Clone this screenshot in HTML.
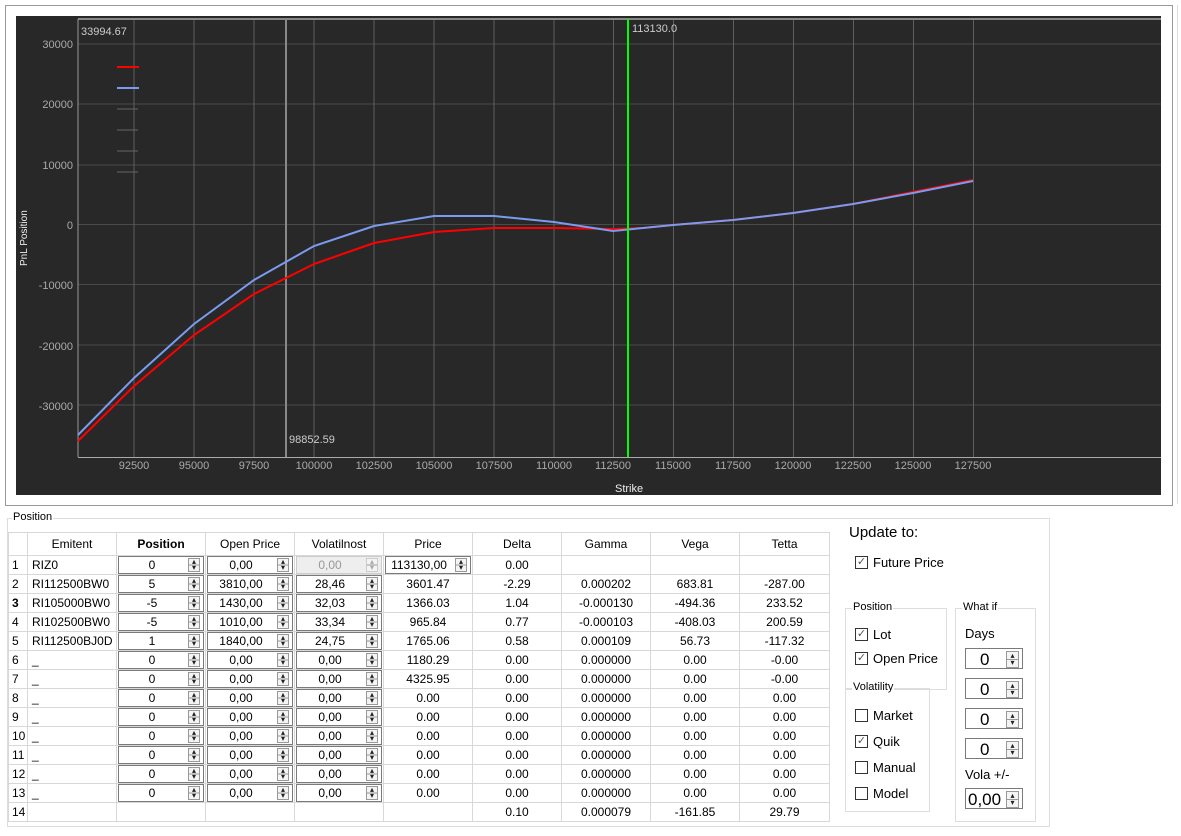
<!DOCTYPE html><html><head><style>
body{margin:0;width:1181px;height:836px;background:#fff;font-family:"Liberation Sans",sans-serif;position:relative;overflow:hidden}
.a{position:absolute}
table{border-collapse:collapse;font-size:12px;table-layout:fixed}
td{border:1px solid #d8d8d8;height:18px;padding:0;text-align:center;color:#000;white-space:nowrap}
th{font-weight:normal;height:20px;border:1px solid #d8d8d8;font-size:12px}
td.n{text-align:left;padding-left:3px}
td.e{text-align:left;padding-left:4px}
.s{position:relative;border:1px solid #7a7a7a;height:16px;margin:0 1px;background:#fff;line-height:16px;padding-right:18px}
.s:after,.sp:after{content:"\25B4\A\25BE";white-space:pre;position:absolute;right:3px;top:1px;width:10px;height:12px;border:1px solid #999;background:linear-gradient(#f4f4f4 46%,#999 46%,#999 54%,#f4f4f4 54%);font-size:8px;line-height:6px;color:#222;text-align:center}
.dis{background:#eee;color:#999;border-color:#ccc}
.dis:after{color:#aaa;border-color:#ccc}
.cb{display:inline-block;box-sizing:border-box;width:13px;height:13px;border:1px solid #333;vertical-align:middle;margin-right:5px;margin-top:-2px;font-size:11px;line-height:11px;text-align:center;color:#555}
.g{border:1px solid #ddd;position:absolute}
.g span.t{position:absolute;top:-8px;left:6px;background:#fff;font-size:11px;padding:0 1px}
.lb{position:absolute;font-size:13px}
.sp{position:absolute;left:965px;width:58px;height:21px;border:1px solid #7a7a7a;font-size:17px;line-height:21px;padding-left:14px;box-sizing:border-box}
.sp:after{top:2px;width:11px;height:15px;line-height:7px}
</style></head><body>
<div class="a" style="left:5px;top:5px;width:1166px;height:499px;border:1px solid #999"></div>
<div class="a" style="left:1177px;top:5px;width:1px;height:499px;background:#ddd"></div>
<svg class="a" style="left:16px;top:16px" width="1145" height="479" font-family="Liberation Sans" font-size="11">
<rect width="1145" height="479" fill="#282828"/>
<g stroke="#4a4a4a" stroke-width="1">
<line x1="62" y1="28" x2="1145" y2="28"/><line x1="62" y1="88" x2="1145" y2="88"/><line x1="62" y1="149" x2="1145" y2="149"/><line x1="62" y1="208.5" x2="1145" y2="208.5"/><line x1="62" y1="268.5" x2="1145" y2="268.5"/><line x1="62" y1="329" x2="1145" y2="329"/><line x1="62" y1="389" x2="1145" y2="389"/>
</g>
<g stroke="#5e5e5e">
<line x1="118" y1="3" x2="118" y2="441"/><line x1="178" y1="3" x2="178" y2="441"/><line x1="238" y1="3" x2="238" y2="441"/><line x1="298" y1="3" x2="298" y2="441"/><line x1="358" y1="3" x2="358" y2="441"/><line x1="418" y1="3" x2="418" y2="441"/><line x1="478" y1="3" x2="478" y2="441"/><line x1="538" y1="3" x2="538" y2="441"/><line x1="597.5" y1="3" x2="597.5" y2="441"/><line x1="657.5" y1="3" x2="657.5" y2="441"/><line x1="717.5" y1="3" x2="717.5" y2="441"/><line x1="777.5" y1="3" x2="777.5" y2="441"/><line x1="837.5" y1="3" x2="837.5" y2="441"/><line x1="897.5" y1="3" x2="897.5" y2="441"/><line x1="957.5" y1="3" x2="957.5" y2="441"/>
</g>
<line x1="62" y1="3" x2="1145" y2="3" stroke="#888" stroke-width="2"/>
<line x1="62" y1="3" x2="62" y2="441" stroke="#999"/>
<line x1="62" y1="441.5" x2="1145" y2="441.5" stroke="#aaa"/>
<line x1="270" y1="3" x2="270" y2="441" stroke="#888" stroke-width="2"/>
<g stroke="#666"><line x1="101" y1="93" x2="122" y2="93"/><line x1="101" y1="114" x2="122" y2="114"/><line x1="101" y1="135" x2="122" y2="135"/><line x1="101" y1="156" x2="122" y2="156"/></g>
<line x1="101" y1="51" x2="123" y2="51" stroke="#f00" stroke-width="2"/>
<line x1="101" y1="72" x2="123" y2="72" stroke="#7b9bf0" stroke-width="2"/>
<polyline fill="none" stroke="#f00" stroke-width="2" points="62,425 118,370 178,319 238,278 298,248 358,227 418,216 478,212 538,212 597,213 627,212 657,209 717,204 777,197 837,188 897,176 957,164"/>
<polyline fill="none" stroke="#7b9bf0" stroke-width="2" points="62,419 118,362 178,308 238,264 298,230 358,210 418,200 478,200 538,206 597,215 627,212 657,209 717,204 777,197 837,188 897,177 957,165"/>
<line x1="612" y1="3" x2="612" y2="441" stroke="#0f0" stroke-width="2"/>
<g fill="#aaa" text-anchor="end"><text x="57" y="32">30000</text><text x="57" y="92">20000</text><text x="57" y="153">10000</text><text x="57" y="213">0</text><text x="57" y="273">-10000</text><text x="57" y="334">-20000</text><text x="57" y="394">-30000</text></g>
<g fill="#aaa" text-anchor="middle"><text x="118" y="453">92500</text><text x="178" y="453">95000</text><text x="238" y="453">97500</text><text x="298" y="453">100000</text><text x="358" y="453">102500</text><text x="418" y="453">105000</text><text x="478" y="453">107500</text><text x="538" y="453">110000</text><text x="597" y="453">112500</text><text x="657" y="453">115000</text><text x="717" y="453">117500</text><text x="777" y="453">120000</text><text x="837" y="453">122500</text><text x="897" y="453">125000</text><text x="957" y="453">127500</text></g>
<text x="599" y="476" fill="#eee">Strike</text>
<text x="65" y="19" fill="#ccc">33994.67</text>
<text x="616" y="16" fill="#ccc">113130.0</text>
<text x="273" y="427" fill="#ccc">98852.59</text>
<text transform="translate(11,250) rotate(-90)" fill="#eee" font-size="10">PnL Position</text>
</svg>
<div class="g" style="left:7px;top:518px;width:1041px;height:307px"><span class="t" style="left:4px">Position</span></div>
<table class="a" style="left:8px;top:532px;width:822px;border:1px solid #999">
<colgroup><col style="width:19px"><col style="width:89px"><col style="width:89px"><col style="width:89px"><col style="width:89px"><col style="width:89px"><col style="width:89px"><col style="width:89px"><col style="width:89px"><col style="width:90px"></colgroup>
<tr><th></th><th>Emitent</th><th><b>Position</b></th><th>Open Price</th><th>Volatilnost</th><th>Price</th><th>Delta</th><th>Gamma</th><th>Vega</th><th>Tetta</th></tr>
<tr><td class="n">1</td><td class="e">RIZ0</td><td><div class="s">0</div></td><td><div class="s">0,00</div></td><td><div class="s dis">0,00</div></td><td><div class="s">113130,00</div></td><td>0.00</td><td></td><td></td><td></td></tr>
<tr><td class="n">2</td><td class="e">RI112500BW0</td><td><div class="s">5</div></td><td><div class="s">3810,00</div></td><td><div class="s">28,46</div></td><td>3601.47</td><td>-2.29</td><td>0.000202</td><td>683.81</td><td>-287.00</td></tr>
<tr><td class="n"><b>3</b></td><td class="e">RI105000BW0</td><td><div class="s">-5</div></td><td><div class="s">1430,00</div></td><td><div class="s">32,03</div></td><td>1366.03</td><td>1.04</td><td>-0.000130</td><td>-494.36</td><td>233.52</td></tr>
<tr><td class="n">4</td><td class="e">RI102500BW0</td><td><div class="s">-5</div></td><td><div class="s">1010,00</div></td><td><div class="s">33,34</div></td><td>965.84</td><td>0.77</td><td>-0.000103</td><td>-408.03</td><td>200.59</td></tr>
<tr><td class="n">5</td><td class="e">RI112500BJ0D</td><td><div class="s">1</div></td><td><div class="s">1840,00</div></td><td><div class="s">24,75</div></td><td>1765.06</td><td>0.58</td><td>0.000109</td><td>56.73</td><td>-117.32</td></tr>
<tr><td class="n">6</td><td class="e">_</td><td><div class="s">0</div></td><td><div class="s">0,00</div></td><td><div class="s">0,00</div></td><td>1180.29</td><td>0.00</td><td>0.000000</td><td>0.00</td><td>-0.00</td></tr>
<tr><td class="n">7</td><td class="e">_</td><td><div class="s">0</div></td><td><div class="s">0,00</div></td><td><div class="s">0,00</div></td><td>4325.95</td><td>0.00</td><td>0.000000</td><td>0.00</td><td>-0.00</td></tr>
<tr><td class="n">8</td><td class="e">_</td><td><div class="s">0</div></td><td><div class="s">0,00</div></td><td><div class="s">0,00</div></td><td>0.00</td><td>0.00</td><td>0.000000</td><td>0.00</td><td>0.00</td></tr>
<tr><td class="n">9</td><td class="e">_</td><td><div class="s">0</div></td><td><div class="s">0,00</div></td><td><div class="s">0,00</div></td><td>0.00</td><td>0.00</td><td>0.000000</td><td>0.00</td><td>0.00</td></tr>
<tr><td class="n">10</td><td class="e">_</td><td><div class="s">0</div></td><td><div class="s">0,00</div></td><td><div class="s">0,00</div></td><td>0.00</td><td>0.00</td><td>0.000000</td><td>0.00</td><td>0.00</td></tr>
<tr><td class="n">11</td><td class="e">_</td><td><div class="s">0</div></td><td><div class="s">0,00</div></td><td><div class="s">0,00</div></td><td>0.00</td><td>0.00</td><td>0.000000</td><td>0.00</td><td>0.00</td></tr>
<tr><td class="n">12</td><td class="e">_</td><td><div class="s">0</div></td><td><div class="s">0,00</div></td><td><div class="s">0,00</div></td><td>0.00</td><td>0.00</td><td>0.000000</td><td>0.00</td><td>0.00</td></tr>
<tr><td class="n">13</td><td class="e">_</td><td><div class="s">0</div></td><td><div class="s">0,00</div></td><td><div class="s">0,00</div></td><td>0.00</td><td>0.00</td><td>0.000000</td><td>0.00</td><td>0.00</td></tr>
<tr><td class="n">14</td><td></td><td></td><td></td><td></td><td></td><td>0.10</td><td>0.000079</td><td>-161.85</td><td>29.79</td></tr>
</table>
<div class="lb" style="left:849px;top:524px;font-size:15px">Update to:</div>
<div class="lb" style="left:855px;top:555px"><span class="cb">✓</span>Future Price</div>
<div class="g" style="left:845px;top:608px;width:100px;height:80px"><span class="t">Position</span></div>
<div class="lb" style="left:855px;top:627px"><span class="cb">✓</span>Lot</div>
<div class="lb" style="left:855px;top:651px"><span class="cb">✓</span>Open Price</div>
<div class="g" style="left:845px;top:688px;width:83px;height:122px"><span class="t">Volatility</span></div>
<div class="lb" style="left:855px;top:708px"><span class="cb"></span>Market</div>
<div class="lb" style="left:855px;top:734px"><span class="cb">✓</span>Quik</div>
<div class="lb" style="left:855px;top:760px"><span class="cb"></span>Manual</div>
<div class="lb" style="left:855px;top:786px"><span class="cb"></span>Model</div>
<div class="g" style="left:955px;top:608px;width:79px;height:212px"><span class="t" style="left:6px">What if</span></div>
<div class="lb" style="left:965px;top:626px">Days</div>
<div class="sp" style="top:648px">0</div>
<div class="sp" style="top:678px">0</div>
<div class="sp" style="top:708px">0</div>
<div class="sp" style="top:738px">0</div>
<div class="lb" style="left:965px;top:767px">Vola +/-</div>
<div class="sp" style="top:788px;padding-left:2px">0,00</div>
</body></html>
